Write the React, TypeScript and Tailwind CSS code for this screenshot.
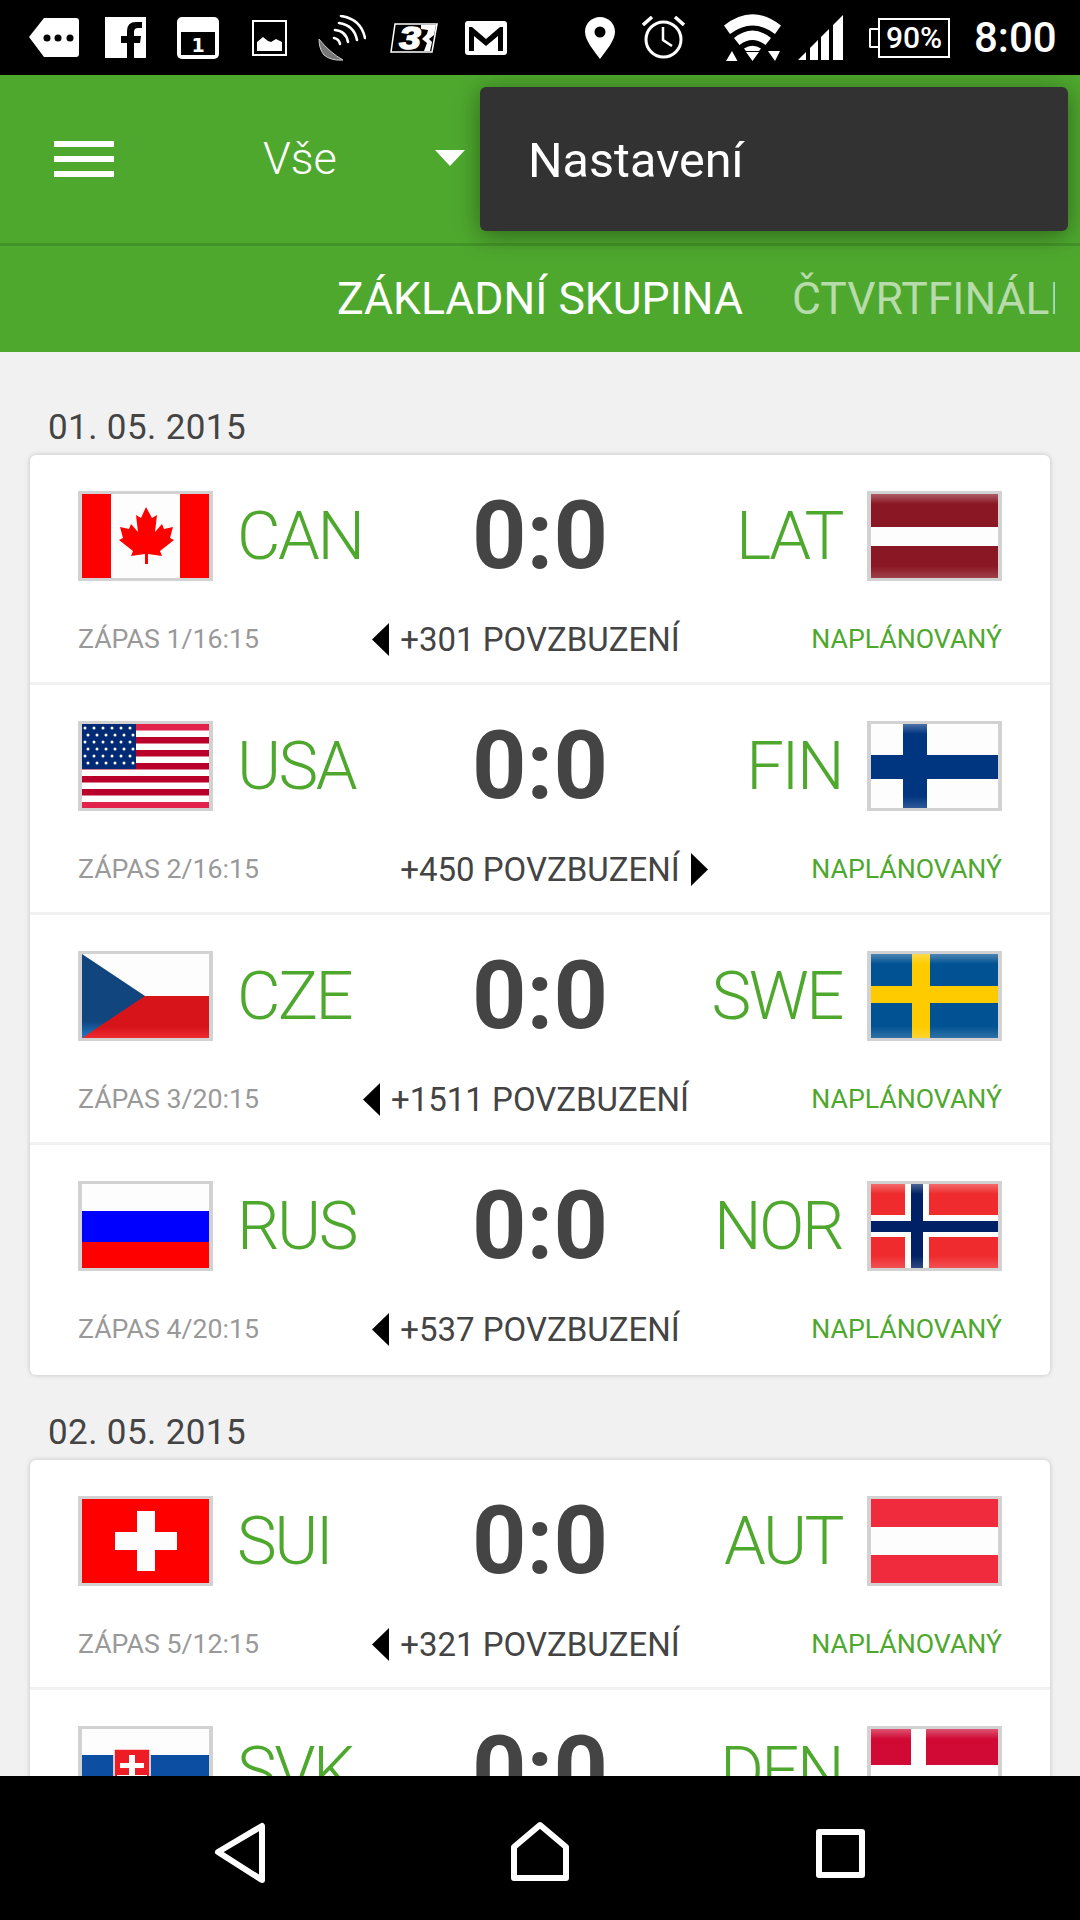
import React from "react";

type FlagCode =
  | "CAN" | "LAT" | "USA" | "FIN" | "CZE" | "SWE"
  | "RUS" | "NOR" | "SUI" | "AUT" | "SVK" | "DEN";

interface Match {
  home: FlagCode;
  away: FlagCode;
  label: string;
  cheers: string;
  side: "left" | "right";
}

const firstDay: Match[] = [
  { home: "CAN", away: "LAT", label: "ZÁPAS 1/16:15", cheers: "+301 POVZBUZENÍ", side: "left" },
  { home: "USA", away: "FIN", label: "ZÁPAS 2/16:15", cheers: "+450 POVZBUZENÍ", side: "right" },
  { home: "CZE", away: "SWE", label: "ZÁPAS 3/20:15", cheers: "+1511 POVZBUZENÍ", side: "left" },
  { home: "RUS", away: "NOR", label: "ZÁPAS 4/20:15", cheers: "+537 POVZBUZENÍ", side: "left" },
];

const secondDay: Match[] = [
  { home: "SUI", away: "AUT", label: "ZÁPAS 5/12:15", cheers: "+321 POVZBUZENÍ", side: "left" },
  { home: "SVK", away: "DEN", label: "ZÁPAS 6/12:15", cheers: "+210 POVZBUZENÍ", side: "left" },
];

// soft highlight along the top and bottom edge of the glossy flags
function Sheen({ id, x = 0, width = 127 }: { id: string; x?: number; width?: number }) {
  return (
    <>
      <defs>
        <linearGradient id={`${id}-top`} x1="0" y1="0" x2="0" y2="1">
          <stop offset="0" stopColor="#fff" stopOpacity="0.3" />
          <stop offset="1" stopColor="#fff" stopOpacity="0" />
        </linearGradient>
        <linearGradient id={`${id}-bottom`} x1="0" y1="1" x2="0" y2="0">
          <stop offset="0" stopColor="#fff" stopOpacity="0.18" />
          <stop offset="1" stopColor="#fff" stopOpacity="0" />
        </linearGradient>
      </defs>
      <rect x={x} width={width} height="10" fill={`url(#${id}-top)`} />
      <rect x={x} y="72" width={width} height="12" fill={`url(#${id}-bottom)`} />
    </>
  );
}

function FlagArt({ code }: { code: FlagCode }) {
  switch (code) {
    case "CAN":
      return (
        <>
          <rect width="127" height="84" fill="#fdfdfd" />
          <rect width="29" height="84" fill="#ff0000" />
          <rect x="98" width="29" height="84" fill="#ff0000" />
          <path
            d="M64 13l6 11 5-3-2 17 7-8 2 5 9-2-3 11 4 2-14 11 2 5-14-2v10h-3V60l-14 2 2-5-14-11 4-2-3-11 9 2 2-5 7 8-2-17 5 3z"
            fill="#ff0000"
          />
        </>
      );
    case "LAT":
      return (
        <>
          <rect width="127" height="84" fill="#8a1724" />
          <Sheen id="lat" />
          <rect y="33" width="127" height="19" fill="#fdfdfd" />
        </>
      );
    case "USA":
      return (
        <>
          <rect width="127" height="84" fill="#fdfdfd" />
          {[0, 13, 26, 39, 52, 65, 78].map((y, i) => (
            <rect key={y} y={y} width="127" height="6.5" fill={i === 0 || i === 6 ? "#e1224a" : "#b9002b"} />
          ))}
          <rect width="54" height="45" fill="#002a74" />
          {[4, 11, 18, 25, 32, 39].map((y, row) =>
            [3, 12, 21, 30, 39, 48].map((x) => (
              <circle key={`${x}-${y}`} cx={x + (row % 2 ? 3 : 0)} cy={y} r="1.5" fill="#ffffff" />
            ))
          )}
        </>
      );
    case "FIN":
      return (
        <>
          <rect width="127" height="84" fill="#fdfdfd" />
          <rect x="32" width="24" height="84" fill="#003580" />
          <rect y="31" width="127" height="24" fill="#003580" />
          <Sheen id="fin" x={32} width={24} />
        </>
      );
    case "CZE":
      return (
        <>
          <defs>
            <linearGradient id="cze-red" x1="0" y1="0" x2="0" y2="1">
              <stop offset="0.75" stopColor="#d7141a" />
              <stop offset="1" stopColor="#ee2a30" />
            </linearGradient>
            <linearGradient id="cze-blue" x1="0" y1="0" x2="0" y2="1">
              <stop offset="0.8" stopColor="#11457e" />
              <stop offset="1" stopColor="#1f7ac8" />
            </linearGradient>
          </defs>
          <rect width="127" height="84" fill="#fdfdfd" />
          <rect y="42" width="127" height="42" fill="url(#cze-red)" />
          <path d="M0 0L63 42 0 84z" fill="url(#cze-blue)" />
        </>
      );
    case "SWE":
      return (
        <>
          <rect width="127" height="84" fill="#005293" />
          <rect x="41" width="18" height="84" fill="#fecb00" />
          <rect y="32" width="127" height="17" fill="#fecb00" />
          <Sheen id="swe" />
        </>
      );
    case "RUS":
      return (
        <>
          <rect width="127" height="84" fill="#fdfdfd" />
          <rect y="27" width="127" height="31" fill="#0000fe" />
          <rect y="58" width="127" height="26" fill="#fe0000" />
        </>
      );
    case "NOR":
      return (
        <>
          <rect width="127" height="84" fill="#ef2b2d" />
          <rect x="34" width="24" height="84" fill="#fdfdfd" />
          <rect y="31" width="127" height="22" fill="#fdfdfd" />
          <rect x="40" width="12" height="84" fill="#002166" />
          <rect y="37" width="127" height="11" fill="#002166" />
          <Sheen id="nor" />
        </>
      );
    case "SUI":
      return (
        <>
          <rect width="127" height="84" fill="#fe0000" />
          <rect x="55" y="12" width="18" height="60" fill="#fdfdfd" />
          <rect x="33" y="33" width="62" height="18" fill="#fdfdfd" />
        </>
      );
    case "AUT":
      return (
        <>
          <rect width="127" height="84" fill="#ef2b3d" />
          <rect y="28" width="127" height="28" fill="#fdfdfd" />
        </>
      );
    case "SVK":
      return (
        <>
          <rect width="127" height="84" fill="#fdfdfd" />
          <rect y="26" width="127" height="29" fill="#0b4ea2" />
          <rect y="55" width="127" height="29" fill="#ee1c25" />
          <path d="M32 20h36v36q0 16-18 22q-18-6-18-22z" fill="#ee1c25" stroke="#fdfdfd" strokeWidth="1.5" />
          <path d="M47 26h6v44h-6zM38 34h24v5H38zM35 46h30v5H35z" fill="#fdfdfd" />
        </>
      );
    case "DEN":
      return (
        <>
          <rect width="127" height="84" fill="#d00a35" />
          <Sheen id="den" />
          <rect x="40" width="15" height="84" fill="#fdfdfd" />
          <rect y="36" width="127" height="14" fill="#fdfdfd" />
        </>
      );
  }
}

function Flag({ code }: { code: FlagCode }) {
  return (
    <div className="w-[135px] h-[90px] shrink-0 border-x-4 border-y-[3px] border-[#d2d2d2]">
      <svg viewBox="0 0 127 84" preserveAspectRatio="none" className="block w-full h-full">
        <FlagArt code={code} />
      </svg>
    </div>
  );
}

function CheerArrow({ direction, hidden }: { direction: "left" | "right"; hidden?: boolean }) {
  return (
    <svg viewBox="0 0 17 33" className={hidden ? "w-[17px] h-[33px] invisible" : "w-[17px] h-[33px]"}>
      <path d={direction === "left" ? "M17 0v33L0 16.5z" : "M0 0v33l17-16.5z"} fill="#000000" />
    </svg>
  );
}

function MatchRow({ match, last }: { match: Match; last: boolean }) {
  return (
    <div className={last ? "h-[230px] px-[48px] pt-[36px]" : "h-[230px] px-[48px] pt-[36px] border-b-[3px] border-[#f1f1f1]"}>
      <div className="grid grid-cols-[1fr_auto_1fr] items-center h-[90px]">
        <div className="flex items-center gap-[24px]">
          <Flag code={match.home} />
          <span className="text-[67px] font-light text-[#4ea82e] tracking-[-2.5px] leading-none">{match.home}</span>
        </div>
        <div className="text-[95px] font-bold text-[#444444] leading-[90px]">0:0</div>
        <div className="flex items-center justify-end gap-[25px]">
          <span className="text-[67px] font-light text-[#4ea82e] tracking-[-2.5px] leading-none">{match.away}</span>
          <Flag code={match.away} />
        </div>
      </div>
      <div className="grid grid-cols-[1fr_auto_1fr] items-center h-[40px] mt-[38px] leading-none">
        <span className="text-[26.7px] text-[#999999]">{match.label}</span>
        <div className="flex items-center gap-[11px] text-[33px] text-[#444444]">
          <CheerArrow direction="left" hidden={match.side !== "left"} />
          <span>{match.cheers}</span>
          <CheerArrow direction="right" hidden={match.side !== "right"} />
        </div>
        <span className="text-[26.7px] text-[#4ea82e] text-right">NAPLÁNOVANÝ</span>
      </div>
    </div>
  );
}

function DayCard({ date, matches }: { date: string; matches: Match[] }) {
  return (
    <section className="px-[30px]">
      <div className="h-[40px] mb-[10px] pl-[18px] text-[35px] leading-[45px] tracking-[0.4px] text-[#444444]">{date}</div>
      <div className="bg-white rounded-[6px] shadow-[0_0_5px_rgba(0,0,0,0.2)]">
        {matches.map((m, i) => (
          <MatchRow key={m.home} match={m} last={i === matches.length - 1} />
        ))}
      </div>
    </section>
  );
}

function StatusBar() {
  return (
    <div className="h-[75px] bg-black flex items-center pl-[29px] text-white shrink-0">
      {/* messenger tag */}
      <svg viewBox="0 0 50 39" className="w-[50px] h-[39px]">
        <path d="M15 0h32q3 0 3 3v33q0 3-3 3H15L0 19z" fill="#fff" />
        <circle cx="18" cy="20" r="3.5" fill="#000" />
        <circle cx="29" cy="20" r="3.5" fill="#000" />
        <circle cx="41" cy="20" r="3.5" fill="#000" />
      </svg>
      {/* facebook */}
      <svg viewBox="0 0 41 41" className="w-[41px] h-[41px] ml-[26px]">
        <path
          d="M0 0h41v41H29V26h6l1-7h-7v-4q0-4 4-4h4V5h-6q-9 0-9 9v5h-6v7h6v15H0z"
          fill="#fff"
        />
      </svg>
      {/* calendar */}
      <svg viewBox="0 0 42 42" className="w-[42px] h-[42px] ml-[31px]">
        <rect width="42" height="42" rx="5" fill="#fff" />
        <rect x="4" y="15" width="34" height="23" fill="#000" />
        <text x="21" y="35" textAnchor="middle" fontFamily="'DejaVu Sans', sans-serif" fontWeight="700" fontSize="19" fill="#fff">1</text>
      </svg>
      {/* gallery */}
      <svg viewBox="0 0 35 36" className="w-[35px] h-[36px] ml-[33px]">
        <rect x="1" y="1" width="33" height="34" fill="none" stroke="#fff" strokeWidth="2" />
        <path d="M5 31V22l6-5 5 4 3 1 5-3 6 3v9z" fill="#fff" />
      </svg>
      {/* satellite */}
      <svg viewBox="0 0 48 46" className="w-[48px] h-[46px] ml-[31px]">
        <path d="M1 24q10 13 24 21-12 1-19-5Q1 34 1 24z" fill="#777" stroke="#ccc" strokeWidth="1" />
        <g fill="none" stroke="#fff" strokeWidth="2.6" strokeLinecap="round">
          <path d="M16 23q5 1 6 6" />
          <path d="M17 15q11 1 13 12" />
          <path d="M21 8q15 2 18 17" />
          <path d="M23 1q20 3 24 22" />
        </g>
      </svg>
      {/* 3 logo */}
      <svg viewBox="0 0 48 30" className="w-[48px] h-[30px] ml-[24px]">
        <path d="M5 1h42l-5 28H1z" fill="#000" stroke="#fff" strokeWidth="1.5" />
        <path d="M31 2h15l-2 10-5 4 3 3-2 9h-6l3-8-5-4 5-5 1-4-7-1z" fill="#fff" />
        <text x="0" y="26" transform="translate(20 0) scale(1.25 1)" textAnchor="middle" fontFamily="'Liberation Sans', sans-serif" fontWeight="700" fontStyle="italic" fontSize="31" fill="#fff" stroke="#fff" strokeWidth="1.5">3</text>
      </svg>
      {/* gmail */}
      <svg viewBox="0 0 42 34" className="w-[42px] h-[34px] ml-[27px]">
        <rect width="42" height="34" rx="3" fill="#fff" />
        <path d="M4 30V6h3l14 12L35 6h3v24h-5V15L21 25 9 15v15z" fill="#000" />
      </svg>
      {/* location pin */}
      <svg viewBox="0 0 30 42" className="w-[30px] h-[42px] ml-[78px]">
        <path
          fillRule="evenodd"
          d="M15 0C6.7 0 0 6.5 0 14.7 0 24 9.500 34 15 42c5.500-8 15-18 15-27.300C30 6.500 23.300 0 15 0zm0 9.500a5.500 5.500 0 110 11 5.500 5.500 0 010-11z"
          fill="#fff"
        />
      </svg>
      {/* alarm */}
      <svg viewBox="0 0 43 43" className="w-[43px] h-[43px] ml-[27px]">
        <circle cx="21.500" cy="23.500" r="17.500" fill="none" stroke="#fff" strokeWidth="3" />
        <path d="M21 11v13l9 6" fill="none" stroke="#fff" strokeWidth="2.500" />
        <path d="M1 9l9-8M42 9l-9-8" fill="none" stroke="#fff" strokeWidth="3.500" />
      </svg>
      {/* wifi */}
      <svg viewBox="0 0 57 48" className="w-[57px] h-[48px] ml-[39px]">
        <path d="M0 11.500Q28.500-11 57 11.500l-6 8.500Q28.500 3 6 20z" fill="#fff" />
        <path d="M10 24Q28.500 9 47 24l-5.500 7Q28.500 21 15.500 31z" fill="#fff" />
        <path d="M20 34.500Q28.500 29 37 34.500l-2 2.500H22z" fill="#fff" />
        <path d="M22 38h13l-6.500 9zM8 37l5.500 10H2zM44 37h12l-5 10z" fill="#fff" />
      </svg>
      {/* signal */}
      <svg viewBox="0 0 45 45" className="w-[45px] h-[45px] ml-[17px]">
        <path d="M0 45l8-8v8zM12 33l8-8v20h-8zM23 22l8-8v31h-8zM35 10L45 0v45H35z" fill="#fff" />
      </svg>
      {/* battery */}
      <div className="flex items-center ml-[26px]">
        <div className="w-[9px] h-[20px] border-y-2 border-l-2 border-white rounded-l-[2px]" />
        <div className="w-[72px] h-[40px] border-2 border-white flex items-center justify-center text-[30px] font-medium leading-none">
          90%
        </div>
      </div>
      <span className="ml-[24px] text-[42px] font-medium leading-none">8:00</span>
    </div>
  );
}

function AppHeader() {
  return (
    <header className="relative shrink-0 bg-[#4ea82e]">
      <div className="h-[168px] flex items-center pl-[54px]">
        <div className="flex flex-col gap-[9px] w-[60px]">
          <span className="h-[6px] bg-white" />
          <span className="h-[6px] bg-white" />
          <span className="h-[6px] bg-white" />
        </div>
        <span className="ml-[149px] w-[172px] mt-[-2px] text-[45px] font-light text-white leading-none">Vše</span>
        <svg viewBox="0 0 30 16" className="w-[30px] h-[16px] mt-[-2px]">
          <path d="M0 0h30L15 16z" fill="#fff" />
        </svg>
      </div>
      <div className="h-[3px] bg-[#439428]" />
      <div className="h-[106px] mr-[25px] pl-[337px] flex items-center gap-[49px] overflow-hidden whitespace-nowrap text-[44.5px]">
        <span className="text-white">ZÁKLADNÍ SKUPINA</span>
        <span className="text-white/60">ČTVRTFINÁLE</span>
      </div>
      {/* overflow menu sits over the toolbar */}
      <div className="absolute left-[480px] top-[12px] w-[588px] h-[144px] pt-[4px] bg-[#323232] rounded-[6px] shadow-[0_4px_24px_rgba(0,0,0,0.4)] flex items-center pl-[48px] text-[48.500px] text-white">
        Nastavení
      </div>
    </header>
  );
}

function NavBar() {
  return (
    <nav className="relative h-[144px] shrink-0 bg-black">
      <svg viewBox="0 0 1080 144" className="block w-full h-full">
        <g fill="none" stroke="#fff" strokeWidth="6" strokeLinejoin="round">
          <path d="M218 76l44-26v54z" />
          <path d="M540 49l26 22v31h-52V71z" />
          <rect x="819" y="56" width="43" height="43" />
        </g>
      </svg>
    </nav>
  );
}

export default function App() {
  return (
    <div className="w-[1080px] h-[1920px] flex flex-col overflow-hidden bg-[#f1f1f1] font-['Roboto','Liberation_Sans',sans-serif]">
      <StatusBar />
      <AppHeader />
      <main className="flex-1 min-h-0 overflow-hidden pt-[53px] flex flex-col gap-[35px]">
        <DayCard date="01. 05. 2015" matches={firstDay} />
        <DayCard date="02. 05. 2015" matches={secondDay} />
      </main>
      <NavBar />
    </div>
  );
}
